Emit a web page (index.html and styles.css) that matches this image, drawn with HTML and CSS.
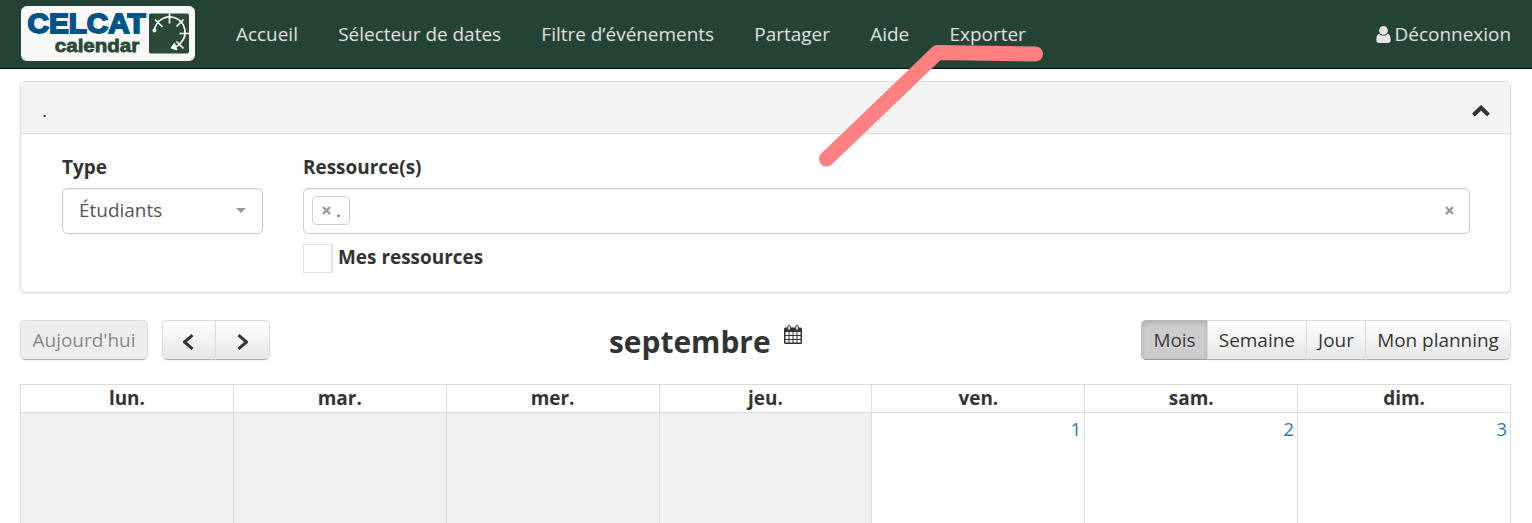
FILE: index.html
```html
<!DOCTYPE html>
<html lang="fr">
<head>
<meta charset="utf-8">
<title>CELCAT calendar</title>
<link rel="stylesheet" href="styles.css">
</head>
<body>
<header class="navbar">
  <a class="brand">
    <svg width="174" height="55" viewBox="0 0 174 55">
      <rect width="174" height="55" rx="6" fill="#f8f8f8"/>
      <text class="brand-main" x="6.500" y="27.300" textLength="118" lengthAdjust="spacingAndGlyphs">CELCAT</text>
      <text class="brand-sub" x="33.800" y="46.300" textLength="84.500" lengthAdjust="spacingAndGlyphs">calendar</text>
      <rect x="128" y="7.500" width="40" height="40" rx="2" fill="#2a4937"/>
      <g fill="none" stroke="#fff" stroke-width="1.700">
        <path d="M133.500 24.500a15.300 15.300 0 1 1 26.500 12q-3 4-6.500 5"/>
        <path d="M148.500 7.500v10M158.500 27.500h9.500M134 13.500l7.500 7.500M162.500 13.500l-7 7M155.500 35.500l7 7"/>
      </g>
      <circle cx="133.500" cy="24.500" r="2" fill="#fff"/>
      <path d="M150 42l3.500-5 2.500 7z" fill="#fff" stroke="#fff"/>
    </svg>
  </a>
  <nav class="menu">
    <a>Accueil</a><a>Sélecteur de dates</a><a>Filtre d’événements</a><a>Partager</a><a>Aide</a><a>Exporter</a>
  </nav>
  <a class="logout">
    <svg width="15" height="18" viewBox="0 0 15 18" fill="#e6e6e6"><circle cx="7.500" cy="4.500" r="4.400"/><path d="M3.200 7.800C1 8.500.3 11 .3 14c0 2 1 3 2.700 3h9c1.700 0 2.700-1 2.700-3 0-3-.7-5.500-2.900-6.200a5.500 5.500 0 0 1-8.600 0z"/></svg>
    <span>Déconnexion</span>
  </a>
</header>
<main class="page">
  <section class="panel">
    <div class="panel-head">
      <span>.</span>
      <svg width="18" height="12" viewBox="0 0 18 12" fill="none" stroke="#333" stroke-width="4"><path d="M1.500 10L9 2.700l7.500 7.300"/></svg>
    </div>
    <div class="panel-body">
      <div class="field-type">
        <label class="label">Type</label>
        <div class="control select"><span>Étudiants</span><i class="caret"></i></div>
      </div>
      <div class="field-res">
        <label class="label">Ressource(s)</label>
        <div class="control multi">
          <span class="tag"><svg class="cross" width="9" height="9" viewBox="0 0 9 9"><path d="M1 1l7 7M8 1L1 8"/></svg><span>.</span></span>
          <svg class="cross" width="9" height="9" viewBox="0 0 9 9"><path d="M1 1l7 7M8 1L1 8"/></svg>
        </div>
        <label class="check"><i class="box"></i><span>Mes ressources</span></label>
      </div>
    </div>
  </section>
  <div class="toolbar">
    <div class="left">
      <button class="btn today">Aujourd'hui</button>
      <div class="group">
        <button class="btn arrow"><svg width="13" height="16" viewBox="1 0 13 16"><path d="M10.500 1.200L2.500 8l8 6.800"/></svg></button>
        <button class="btn arrow"><svg width="11" height="16" viewBox="0 0 11 16"><path d="M1.500 1.200L9.500 8l-8 6.800"/></svg></button>
      </div>
    </div>
    <div class="title">
      <h2>septembre</h2>
      <svg width="18" height="19" viewBox="0 0 18 19"><rect y="2.500" width="18" height="16.500" rx="1.500" fill="#333"/><path fill="#fff" d="M1.500 7h3v3h-3zM5.500 7h3v3h-3zM9.500 7h3v3h-3zM13.500 7h3v3h-3zM1.500 11h3v3h-3zM5.500 11h3v3h-3zM9.500 11h3v3h-3zM13.500 11h3v3h-3zM1.500 15h3v2.500h-3zM5.500 15h3v2.500h-3zM9.500 15h3v2.500h-3zM13.500 15h3v2.500h-3z"/><g fill="#fff" stroke="#333"><rect x="3.700" y=".5" width="2.600" height="4.800" rx="1.300"/><rect x="11.700" y=".5" width="2.600" height="4.800" rx="1.300"/></g></svg>
    </div>
    <div class="group views">
      <button class="btn active">Mois</button><button class="btn">Semaine</button><button class="btn">Jour</button><button class="btn">Mon planning</button>
    </div>
  </div>
  <div class="calendar">
    <div class="day">lun.</div><div class="day">mar.</div><div class="day">mer.</div><div class="day">jeu.</div><div class="day">ven.</div><div class="day">sam.</div><div class="day">dim.</div>
    <div class="cell off"></div><div class="cell off"></div><div class="cell off"></div><div class="cell off"></div><div class="cell">1</div><div class="cell">2</div><div class="cell">3</div>
  </div>
</main>
<svg class="marker" width="240" height="130" viewBox="0 0 240 130"><path d="M16.500 119L127.500 12.500l98 1.500"/></svg>
</body>
</html>
```
FILE: styles.css
```css
* { box-sizing: border-box; }
body {
  margin: 0;
  height: 523px;
  overflow: hidden;
  background: #fff;
  color: #333;
  font: 18.96px/27px "Open Sans", "Noto Sans", sans-serif;
}
svg { display: block; flex: none; }
.navbar {
  display: flex;
  align-items: flex-start;
  height: 69px;
  padding: 6px 21px 0;
  background: #244334;
  border-bottom: 1px solid #080808;
  color: #e0e0e0;
}
.brand-main { font: bold 27.5px "Liberation Sans", sans-serif; fill: #005488; stroke: #005488; stroke-width: 1.8px; }
.brand-sub { font: bold 19px "Liberation Sans", sans-serif; fill: #2a4937; stroke: #2a4937; stroke-width: .8px; }
.menu { display: flex; gap: 40.3px; margin: 15px 0 0 41px; }
.logout { display: flex; gap: 4px; margin: 15px 0 0 auto; }
.logout svg { margin-top: 5px; }
.page { height: 454px; padding: 12px 21px 0 20px; overflow: hidden; }
.panel {
  height: 212px;
  border: 1px solid #ddd;
  border-radius: 5px;
  box-shadow: 0 1px 2px rgba(0, 0, 0, .08);
  overflow: hidden;
}
.panel-head {
  display: flex;
  justify-content: space-between;
  align-items: center;
  height: 52px;
  padding: 6px 20px 0 21px;
  background: #f4f4f4;
  border-bottom: 1px solid #e0e0e0;
}
.panel-body { display: flex; gap: 40px; padding: 20px 40px 0 41px; }
.field-type { width: 201px; }
.field-res { flex: 1; }
.label { display: block; font-weight: bold; height: 34px; }
.control {
  display: flex;
  align-items: center;
  justify-content: space-between;
  height: 46px;
  border: 1px solid #ccc;
  border-radius: 5px;
  box-shadow: inset 0 1px 2px rgba(0, 0, 0, .08);
  color: #555;
}
.select { padding: 0 16px 2px; }
.caret { border: 5px solid transparent; border-top-color: #999; border-bottom: 0; }
.multi { padding: 0 15px 2px 8px; }
.tag {
  display: flex;
  align-items: center;
  gap: 5px;
  width: 38px;
  height: 29px;
  padding-left: 9px;
  border: 1px solid #ccc;
  border-radius: 5px;
}
.cross { fill: none; stroke: #999; stroke-width: 2.3px; }
.check { display: flex; gap: 5px; margin-top: 10px; font-weight: bold; }
.box { width: 30px; height: 29px; border: 1px solid #e4e1da; border-width: 1px 2px 1px 1px; }
.toolbar { display: grid; grid-template-columns: 589px 1fr auto; height: 40px; margin-top: 27px; }
.left { display: flex; gap: 14px; }
.group { display: flex; }
.btn {
  height: 40px;
  padding: 0 11.1px;
  border: 1px solid #ddd;
  border-bottom-color: #b3b3b3;
  border-radius: 5px;
  background: linear-gradient(#fff, #e6e6e6);
  box-shadow: 0 1px 2px rgba(0, 0, 0, .05);
  color: #333;
  font: inherit;
  text-shadow: 0 1px 1px rgba(255, 255, 255, .75);
}
.group .btn { border-radius: 0; }
.group .btn + .btn { margin-left: -1px; }
.group .btn:first-child { border-radius: 5px 0 0 5px; }
.group .btn:last-child { border-radius: 0 5px 5px 0; }
.group .active { background: #ccc; border-color: #bbb; border-bottom-color: #999; box-shadow: inset 0 2px 4px rgba(0, 0, 0, .15); }
.today { width: 128px; background: #eee; color: #858585; }
.arrow { display: flex; align-items: center; justify-content: center; width: 54px; padding-top: 4px; }
.group .arrow:last-child { width: 55px; }
.arrow svg { fill: none; stroke: #333; stroke-width: 3px; }
.title { display: flex; gap: 13.5px; }
.title h2 { margin: 0; font-size: 29.9px; line-height: 44px; }
.title svg { margin-top: 5px; }
.calendar {
  display: grid;
  grid-template-columns: repeat(7, 1fr);
  grid-template-rows: 28px 160px;
  margin-top: 24px;
  border: 1px solid #ddd;
  border-width: 1px 0 0 1px;
}
.day, .cell { border: 1px solid #ddd; border-width: 0 1px 1px 0; }
.day { font-weight: bold; text-align: center; }
.cell { padding: 3px 3px 0; text-align: right; color: #337ab7; }
.off { background: #f1f1f1; }
.marker { position: absolute; left: 810px; top: 40px; fill: none; stroke: #ff8080; stroke-width: 15px; stroke-linecap: round; stroke-linejoin: round; }
```
